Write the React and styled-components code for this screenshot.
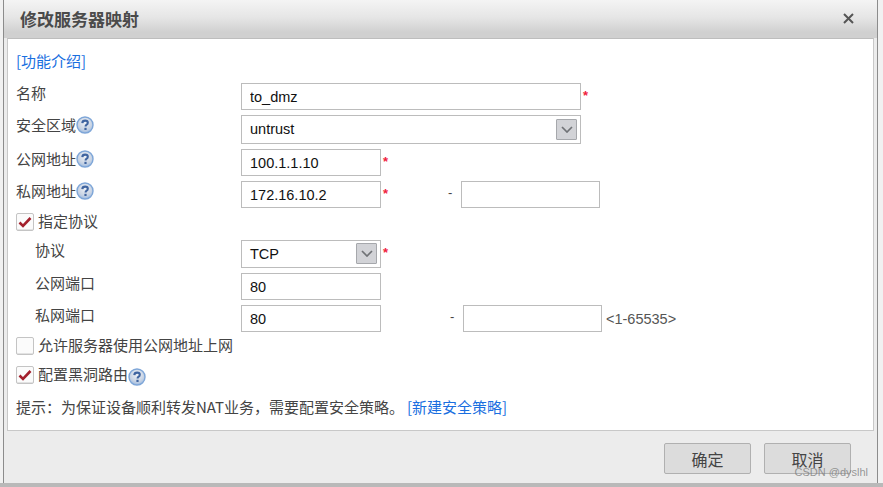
import React from 'react';
import styled, { createGlobalStyle } from 'styled-components';

const GlobalStyle = createGlobalStyle`
  html, body {
    margin: 0;
    padding: 0;
    background: #ececec;
  }
`;

const HelpIcon = () => (
  <HelpSvg width="18" height="18" viewBox="0 0 18 18">
    <defs>
      <radialGradient id="helpFill" cx="50%" cy="35%" r="65%">
        <stop offset="0%" stopColor="#eef1f6" />
        <stop offset="65%" stopColor="#c9d4e4" />
        <stop offset="100%" stopColor="#9dbae0" />
      </radialGradient>
    </defs>
    <circle cx="9" cy="9" r="8" fill="url(#helpFill)" stroke="#7ea6d8" strokeWidth="1.4" />
    <path d="M6.3 7.1C6.4 5.4 7.6 4.6 9.1 4.6c1.7 0 2.7 .9 2.7 2.2 0 1-.6 1.6-1.4 2.1-.6 .4-.8 .7-.8 1.6" fill="none" stroke="#3f64a0" strokeWidth="2.1" />
    <rect x="8.4" y="11.8" width="2.2" height="2.2" fill="#3f64a0" />
  </HelpSvg>
);

const ComboArrow = () => (
  <svg width="12" height="7" viewBox="0 0 12 7">
    <path d="M1 1l5 5 5-5" fill="none" stroke="#707276" strokeWidth="1.7" />
  </svg>
);

const CheckMark = () => (
  <svg width="14" height="12" viewBox="0 0 14 12">
    <path d="M1.5 6.5l3.5 3.5 7.5-8" fill="none" stroke="#a3202c" strokeWidth="2.6" />
  </svg>
);

const CloseIcon = () => (
  <svg width="11" height="11" viewBox="0 0 11 11">
    <path d="M1 1l9 9M10 1l-9 9" fill="none" stroke="#555" strokeWidth="2" />
  </svg>
);

const App = () => (
  <>
    <GlobalStyle />
    <Frame>
      <Dialog>
        <TitleBar>
          <Title>修改服务器映射</Title>
          <CloseButton><CloseIcon /></CloseButton>
        </TitleBar>

        <Panel>
          <IntroLink>[功能介绍]</IntroLink>

          <Row $h={27}>
            <Label>名称</Label>
            <Input $w={340} value="to_dmz" readOnly />
            <Required>*</Required>
          </Row>

          <Row $h={29} $top={5}>
            <Label>安全区域<HelpIcon /></Label>
            <Select $w={340} $h={29}>
              untrust
              <ComboButton><ComboArrow /></ComboButton>
            </Select>
          </Row>

          <Row $h={27} $top={5}>
            <Label>公网地址<HelpIcon /></Label>
            <Input $w={140} value="100.1.1.10" readOnly />
            <Required>*</Required>
          </Row>

          <Row $h={27} $top={5}>
            <Label>私网地址<HelpIcon /></Label>
            <Input $w={140} value="172.16.10.2" readOnly />
            <Required>*</Required>
            <RangeDash $w={78}>-</RangeDash>
            <Input $w={139} readOnly />
          </Row>

          <CheckRow $h={28} $bottom={4}>
            <Checkbox $checked><CheckMark /></Checkbox>
            <CheckText>指定协议</CheckText>
          </CheckRow>

          <Row $h={28}>
            <Label $indent>协议</Label>
            <Select $w={140} $h={28}>
              TCP
              <ComboButton><ComboArrow /></ComboButton>
            </Select>
            <Required>*</Required>
          </Row>

          <Row $h={27} $top={5}>
            <Label $indent>公网端口</Label>
            <Input $w={140} value="80" readOnly />
          </Row>

          <Row $h={27} $top={5}>
            <Label $indent>私网端口</Label>
            <Input $w={140} value="80" readOnly />
            <RangeDash $w={82}>-</RangeDash>
            <Input $w={139} readOnly />
            <Hint>&lt;1-65535&gt;</Hint>
          </Row>

          <CheckRow $h={28}>
            <Checkbox />
            <CheckText>允许服务器使用公网地址上网</CheckText>
          </CheckRow>

          <CheckRow $h={28} $top={1}>
            <Checkbox $checked><CheckMark /></Checkbox>
            <CheckText>配置黑洞路由</CheckText>
            <LowHelp><HelpIcon /></LowHelp>
          </CheckRow>

          <Notice>
            提示：为保证设备顺利转发NAT业务，需要配置安全策略。
            <NoticeLink>[新建安全策略]</NoticeLink>
          </Notice>
        </Panel>

        <Footer>
          <FooterButton>确定</FooterButton>
          <FooterButton>取消</FooterButton>
        </Footer>
      </Dialog>
      <Watermark>CSDN @dyslhl</Watermark>
    </Frame>
  </>
);

export default App;

const cjk = `"Noto Sans CJK SC", "Liberation Sans", sans-serif`;

const Frame = styled.div`
  position: relative;
  width: 883px;
  height: 487px;
  overflow: hidden;
  box-sizing: border-box;
  padding: 0 5px 4px 3px;
  background: #f1f1f1;
  border-bottom: 4px solid #b9b9b9;
  font-family: ${cjk};
  color: #444;
`;

const Dialog = styled.div`
  display: flex;
  flex-direction: column;
  height: 483px;
  box-sizing: border-box;
  border-left: 1px solid #8c8c8c;
  border-right: 1px solid #8c8c8c;
  background: #ececec;
`;

const TitleBar = styled.div`
  display: flex;
  align-items: center;
  justify-content: space-between;
  flex: none;
  height: 38px;
  box-sizing: border-box;
  padding: 0 23px 2px 16px;
  background: linear-gradient(to bottom, #f4f4f4 0%, #e6e6e6 45%, #d0d0d0 85%, #d0d0d0 100%);
`;

const Title = styled.div`
  font-size: 17px;
  font-weight: 700;
  color: #4a4a4a;
`;

const CloseButton = styled.div`
  display: flex;
`;

const Panel = styled.div`
  flex: none;
  height: 393px;
  box-sizing: border-box;
  margin: 0 3px;
  padding: 12px 8px 0;
  background: #fff;
  border-top: 1px solid #bdbdbd;
  border-right: 1px solid #c8c8c8;
  border-left: 1px solid #c8c8c8;
  border-bottom: 1px solid #c8c8c8;
  font-size: 15px;
`;

const IntroLink = styled.a`
  display: block;
  height: 32px;
  line-height: 20px;
  color: #1a6fe0;
`;

const Row = styled.div`
  display: flex;
  align-items: flex-start;
  height: ${({ $h }) => $h}px;
  margin-top: ${({ $top }) => $top || 0}px;
`;

const Label = styled.div`
  display: flex;
  align-items: center;
  flex: none;
  box-sizing: border-box;
  width: 225px;
  height: 18px;
  padding-left: ${({ $indent }) => ($indent ? '19px' : '0')};
  color: #444;
`;

const HelpSvg = styled.svg`
  flex: none;
  margin-top: 2px;
`;

const Input = styled.input`
  flex: none;
  width: ${({ $w }) => $w}px;
  height: 27px;
  box-sizing: border-box;
  padding: 0 8px;
  border: 1px solid #bcbcbc;
  outline: none;
  font: 14.5px "Liberation Sans", sans-serif;
  color: #111;
`;

const Select = styled.div`
  display: flex;
  align-items: center;
  justify-content: space-between;
  flex: none;
  width: ${({ $w }) => $w}px;
  height: ${({ $h }) => $h}px;
  box-sizing: border-box;
  padding: 0 3px 1px 8px;
  border: 1px solid #bcbcbc;
  font: 14.5px "Liberation Sans", sans-serif;
  color: #111;
`;

const ComboButton = styled.div`
  display: flex;
  align-items: center;
  justify-content: center;
  width: 21px;
  height: 21px;
  box-sizing: border-box;
  border: 1px solid #a6a8ac;
  border-radius: 1px;
  background: #d2d3d7;
`;

const Required = styled.span`
  flex: none;
  width: 0;
  padding: 5px 0 0 2px;
  font: 700 13px "Liberation Sans", sans-serif;
  color: #f01c3c;
  white-space: nowrap;
`;

const RangeDash = styled.span`
  flex: none;
  box-sizing: border-box;
  width: ${({ $w }) => $w}px;
  padding-left: ${({ $w }) => $w - 13}px;
  font: 13px/24px "Liberation Sans", sans-serif;
`;

const Hint = styled.span`
  margin-left: 4px;
  padding-top: 6px;
  font: 14.5px "Liberation Sans", sans-serif;
  color: #555;
`;

const CheckRow = styled.div`
  display: flex;
  align-items: center;
  gap: 4px;
  height: ${({ $h }) => $h}px;
  margin-top: ${({ $top }) => $top || 0}px;
  margin-bottom: ${({ $bottom }) => $bottom || 0}px;
`;

const CheckText = styled.span`
  margin-top: -3px;
`;

const Checkbox = styled.span`
  display: flex;
  align-items: center;
  justify-content: center;
  flex: none;
  width: 18px;
  height: 18px;
  box-sizing: border-box;
  border: 1px solid #c4c4c4;
  border-radius: 2px;
  background: #fbfbfb;
  box-shadow: inset 0 -1px 0 #e2e2e2;
`;

const LowHelp = styled.span`
  display: flex;
  margin: 1px 0 0 -4px;
`;

const Notice = styled.div`
  margin-top: 8px;
  line-height: 20px;
  color: #444;
`;

const NoticeLink = styled.a`
  margin-left: 3px;
  color: #1a6fe0;
`;

const Footer = styled.div`
  display: flex;
  justify-content: flex-end;
  gap: 13px;
  padding: 12px 26px 0 0;
  background: #ececec;
`;

const FooterButton = styled.div`
  display: flex;
  align-items: center;
  justify-content: center;
  width: 87px;
  height: 31px;
  box-sizing: border-box;
  border: 1px solid #b0b0b0;
  border-radius: 2px;
  background: #dcdcdc;
  font-size: 16px;
  color: #444;
`;

const Watermark = styled.div`
  position: absolute;
  right: 15px;
  bottom: 5px;
  font: 11px "Liberation Sans", sans-serif;
  color: rgba(120, 120, 120, 0.75);
`;
